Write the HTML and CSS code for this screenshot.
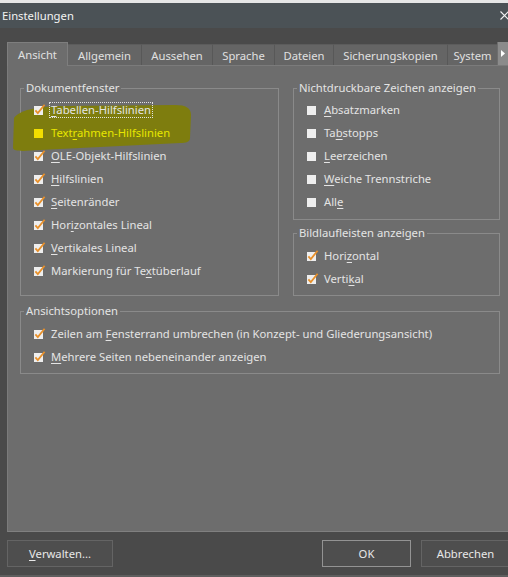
FILE: index.html
```html
<!DOCTYPE html>
<html lang="de">
<head>
<meta charset="utf-8">
<title>Einstellungen</title>
<link rel="stylesheet" href="styles.css">
</head>
<body>
<div class="window">
  <div class="topstrip"></div>
  <div class="titlebar">
    <span class="title">Einstellungen</span>
    <svg class="close" viewBox="0 0 9 9"><path d="M0.5 0.5 L8.5 8.5 M8.5 0.5 L0.5 8.5" stroke="#f2f2f2" stroke-width="1.1" fill="none"/></svg>
  </div>
  <div class="dialog">
    <div class="tabs">
      <div class="tab active tab-ansicht">Ansicht</div>
      <div class="tab tab-allgemein">Allgemein</div>
      <div class="tab tab-aussehen">Aussehen</div>
      <div class="tab tab-sprache">Sprache</div>
      <div class="tab tab-dateien">Dateien</div>
      <div class="tab tab-sicherung">Sicherungskopien</div>
      <div class="tab tab-system">System</div>
      <div class="tab-scroll"><svg class="tri" viewBox="0 0 4 7"><path d="M0 0 L4 3.5 L0 7 Z" fill="#ffffff"/></svg></div>
    </div>
    <div class="panel">
      <svg class="highlight" viewBox="0 0 200 100"><path d="M6 52 C12 44 27 41 52 40 L167 39 C178 39 183 42 183 49 L182 72 C182 76 178 77 172 77 L32 84 C17 85 6 86 5 82 Z" fill="#7e7d0e"/></svg>
      <div class="columns">
        <fieldset class="group g-doc">
          <legend>Dokumentfenster</legend>
          <div class="row"><svg class="cb" viewBox="0 0 12 12"><rect x="0" y="2" width="9" height="9" fill="#eeeeee"/><path d="M1.4 6.3 L3.8 9 L10.6 0.8" fill="none" stroke="#e8902a" stroke-width="1.8"/></svg><span class="label focus"><u>T</u>abellen-Hilfslinien</span></div>
          <div class="row marked"><svg class="cb" viewBox="0 0 12 12"><rect x="0" y="2" width="9" height="9" fill="#f2de00"/></svg><span class="label">Text<u>r</u>ahmen-Hilfslinien</span></div>
          <div class="row"><svg class="cb" viewBox="0 0 12 12"><rect x="0" y="2" width="9" height="9" fill="#eeeeee"/><path d="M1.4 6.3 L3.8 9 L10.6 0.8" fill="none" stroke="#e8902a" stroke-width="1.8"/></svg><span class="label"><u>O</u>LE-Objekt-Hilfslinien</span></div>
          <div class="row"><svg class="cb" viewBox="0 0 12 12"><rect x="0" y="2" width="9" height="9" fill="#eeeeee"/><path d="M1.4 6.3 L3.8 9 L10.6 0.8" fill="none" stroke="#e8902a" stroke-width="1.8"/></svg><span class="label"><u>H</u>ilfslinien</span></div>
          <div class="row"><svg class="cb" viewBox="0 0 12 12"><rect x="0" y="2" width="9" height="9" fill="#eeeeee"/><path d="M1.4 6.3 L3.8 9 L10.6 0.8" fill="none" stroke="#e8902a" stroke-width="1.8"/></svg><span class="label"><u>S</u>eitenränder</span></div>
          <div class="row"><svg class="cb" viewBox="0 0 12 12"><rect x="0" y="2" width="9" height="9" fill="#eeeeee"/><path d="M1.4 6.3 L3.8 9 L10.6 0.8" fill="none" stroke="#e8902a" stroke-width="1.8"/></svg><span class="label">Hor<u>i</u>zontales Lineal</span></div>
          <div class="row"><svg class="cb" viewBox="0 0 12 12"><rect x="0" y="2" width="9" height="9" fill="#eeeeee"/><path d="M1.4 6.3 L3.8 9 L10.6 0.8" fill="none" stroke="#e8902a" stroke-width="1.8"/></svg><span class="label"><u>V</u>ertikales Lineal</span></div>
          <div class="row"><svg class="cb" viewBox="0 0 12 12"><rect x="0" y="2" width="9" height="9" fill="#eeeeee"/><path d="M1.4 6.3 L3.8 9 L10.6 0.8" fill="none" stroke="#e8902a" stroke-width="1.8"/></svg><span class="label">Markierung für Te<u>x</u>tüberlauf</span></div>
        </fieldset>
        <div class="col-right">
          <fieldset class="group g-nd">
            <legend>Nichtdruckbare Zeichen anzeigen</legend>
            <div class="row"><svg class="cb" viewBox="0 0 12 12"><rect x="0" y="2" width="9" height="9" fill="#eeeeee"/></svg><span class="label"><u>A</u>bsatzmarken</span></div>
            <div class="row"><svg class="cb" viewBox="0 0 12 12"><rect x="0" y="2" width="9" height="9" fill="#eeeeee"/></svg><span class="label">Ta<u>b</u>stopps</span></div>
            <div class="row"><svg class="cb" viewBox="0 0 12 12"><rect x="0" y="2" width="9" height="9" fill="#eeeeee"/></svg><span class="label"><u>L</u>eerzeichen</span></div>
            <div class="row"><svg class="cb" viewBox="0 0 12 12"><rect x="0" y="2" width="9" height="9" fill="#eeeeee"/></svg><span class="label"><u>W</u>eiche Trennstriche</span></div>
            <div class="row"><svg class="cb" viewBox="0 0 12 12"><rect x="0" y="2" width="9" height="9" fill="#eeeeee"/></svg><span class="label">All<u>e</u></span></div>
          </fieldset>
          <fieldset class="group g-bild">
            <legend>Bildlaufleisten anzeigen</legend>
            <div class="row"><svg class="cb" viewBox="0 0 12 12"><rect x="0" y="2" width="9" height="9" fill="#eeeeee"/><path d="M1.4 6.3 L3.8 9 L10.6 0.8" fill="none" stroke="#e8902a" stroke-width="1.8"/></svg><span class="label">Hori<u>z</u>ontal</span></div>
            <div class="row"><svg class="cb" viewBox="0 0 12 12"><rect x="0" y="2" width="9" height="9" fill="#eeeeee"/><path d="M1.4 6.3 L3.8 9 L10.6 0.8" fill="none" stroke="#e8902a" stroke-width="1.8"/></svg><span class="label">Verti<u>k</u>al</span></div>
          </fieldset>
        </div>
      </div>
      <fieldset class="group g-ansicht">
        <legend>Ansichtsoptionen</legend>
        <div class="row"><svg class="cb" viewBox="0 0 12 12"><rect x="0" y="2" width="9" height="9" fill="#eeeeee"/><path d="M1.4 6.3 L3.8 9 L10.6 0.8" fill="none" stroke="#e8902a" stroke-width="1.8"/></svg><span class="label">Zeilen am <u>F</u>ensterrand umbrechen (in Konzept- und Gliederungsansicht)</span></div>
        <div class="row"><svg class="cb" viewBox="0 0 12 12"><rect x="0" y="2" width="9" height="9" fill="#eeeeee"/><path d="M1.4 6.3 L3.8 9 L10.6 0.8" fill="none" stroke="#e8902a" stroke-width="1.8"/></svg><span class="label"><u>M</u>ehrere Seiten nebeneinander anzeigen</span></div>
      </fieldset>
    </div>
  </div>
  <div class="footer">
    <button class="btn btn-manage"><u>V</u>erwalten...</button>
    <button class="btn btn-ok">OK</button>
    <button class="btn btn-cancel">Abbrechen</button>
  </div>
</div>
</body>
</html>
```
FILE: styles.css
```css
html, body {
  margin: 0;
  padding: 0;
}
body {
  width: 508px;
  height: 577px;
  overflow: hidden;
  background: #4a4a4a;
  font-family: "Noto Sans", "Open Sans", sans-serif;
  font-size: 11.25px;
  color: #e4e4e4;
}
.window {
  width: 508px;
  height: 577px;
  overflow: hidden;
}
.topstrip {
  height: 3px;
  background: #e6e6e6;
}
.titlebar {
  height: 25px;
  background: #4b5256;
  display: flex;
  align-items: center;
  justify-content: space-between;
  padding-left: 2px;
}
.title {
  color: #f2f2f2;
  font-size: 11.25px;
}
.close {
  width: 9px;
  height: 9px;
  margin-right: -1px;
}
.dialog {
  padding: 14px 0 0 7px;
}
.tabs {
  display: flex;
  align-items: flex-end;
  height: 23px;
}
.tab {
  box-sizing: border-box;
  height: 21px;
  flex-shrink: 0;
  display: flex;
  align-items: center;
  justify-content: center;
  background: #656565;
  border-top: 1px solid #5c5c5c;
  border-right: 1px solid #585858;
  color: #e0e0e0;
  white-space: nowrap;
}
.tab.active {
  position: relative;
  z-index: 1;
  height: 24px;
  margin-bottom: -1px;
  padding-bottom: 1px;
  background: #6d6d6d;
  border: 1px solid #7e7e7e;
  border-bottom: none;
}
.tab-ansicht { width: 61px; }
.tab-allgemein { width: 74px; }
.tab-aussehen { width: 71px; }
.tab-sprache { width: 62px; }
.tab-dateien { width: 59px; }
.tab-sicherung { width: 114px; }
.tab-system { width: 49px; border-right: none; }
.tab-scroll {
  box-sizing: border-box;
  width: 11px;
  height: 23px;
  flex-shrink: 0;
  display: flex;
  align-items: center;
  padding-left: 3px;
  background: #8b8b8b;
  border-left: 1px solid #6e6e6e;
}
.tri {
  width: 4px;
  height: 7px;
}
.panel {
  position: relative;
  box-sizing: border-box;
  height: 467px;
  background: #6d6d6d;
  border-top: 1px solid #7b7b7b;
  border-left: 1px solid #7b7b7b;
  border-bottom: 1px solid #808080;
  padding-left: 12px;
}
.highlight {
  position: absolute;
  left: 0;
  top: 0;
  width: 200px;
  height: 100px;
  z-index: 1;
}
.columns {
  display: grid;
  grid-template-columns: 259px 207px;
  column-gap: 14px;
  align-items: start;
  margin-top: 14px;
}
.group {
  box-sizing: border-box;
  margin: 0;
  padding: 0;
  min-width: 0;
  border: 1px solid #8a8a8a;
}
.group legend {
  margin-left: 3px;
  padding: 0 2px;
  line-height: 16px;
  color: #e4e4e4;
}
.g-doc { padding: 2px 0 13px; }
.g-nd { padding: 2px 0 6px; }
.g-bild { margin-top: 5px; padding: 3px 0 5px; }
.g-ansicht {
  width: 480px;
  margin-top: 7px;
  padding: 3px 0 5px;
}
.row {
  position: relative;
  z-index: 2;
  display: flex;
  align-items: center;
  height: 23px;
  padding-left: 13px;
  white-space: nowrap;
}
.cb {
  width: 12px;
  height: 12px;
  flex-shrink: 0;
}
.label {
  margin-left: 5px;
  line-height: 14px;
}
.label.focus {
  margin-left: 4px;
  padding: 0 1px;
  outline: 1px dotted #e2e2e2;
}
.marked .label {
  color: #e8e600;
}
u {
  text-decoration: underline;
  text-underline-offset: 2px;
}
.footer {
  box-sizing: border-box;
  height: 45px;
  display: flex;
  align-items: flex-start;
  padding: 8px 0 0 7px;
  border-bottom: 2px solid #5e5e5e;
}
.btn {
  box-sizing: border-box;
  height: 27px;
  flex-shrink: 0;
  padding: 0;
  background: #4e4e4e;
  border: 1px solid #646464;
  color: #e8e8e8;
  font-family: inherit;
  font-size: 11.25px;
}
.btn-manage { width: 106px; }
.btn-ok {
  width: 89px;
  margin-left: auto;
  border-color: #939393;
}
.btn-cancel {
  width: 89px;
  margin-left: 10px;
  margin-right: -2px;
}
```
